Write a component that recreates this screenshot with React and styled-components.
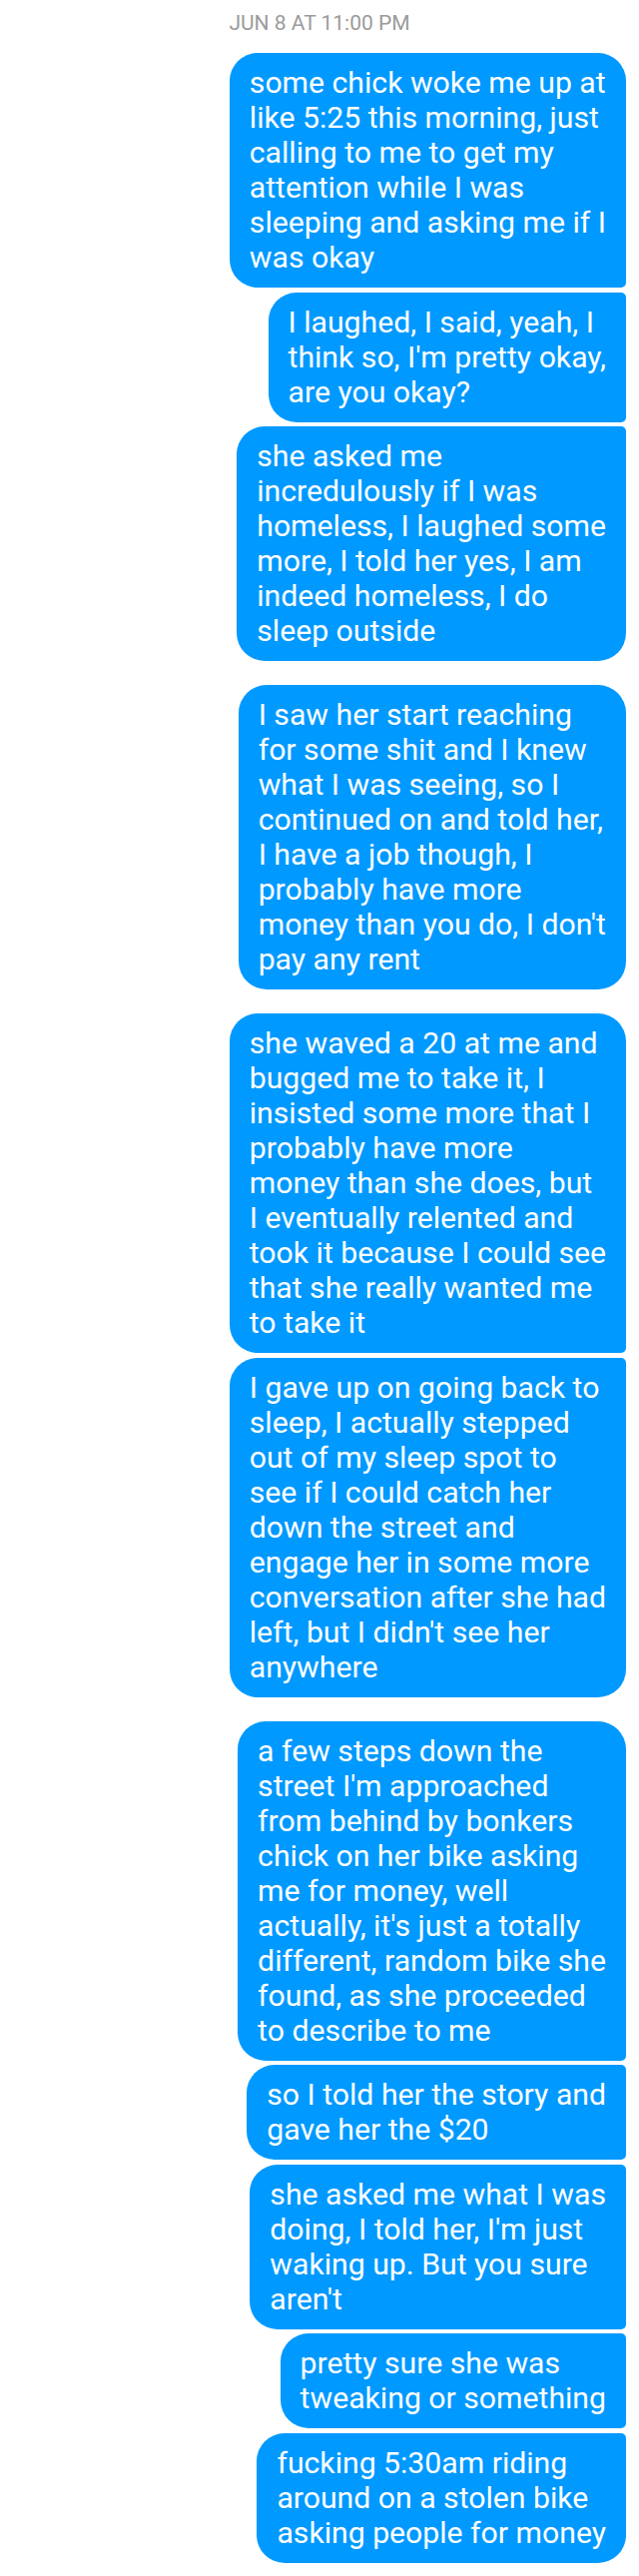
import styled, { createGlobalStyle } from 'styled-components';

const GlobalStyle = createGlobalStyle`
  html, body {
    margin: 0;
    padding: 0;
    background: #ffffff;
  }
  body {
    font-family: Roboto, "Noto Sans", "Liberation Sans", sans-serif;
    -webkit-font-smoothing: antialiased;
  }
`;

const Thread = styled.div`
  width: 640px;
  min-height: 2580px;
  box-sizing: border-box;
  padding: 11px 13px 0 0;
  display: flex;
  flex-direction: column;
  align-items: flex-end;
  gap: 24px;
`;

const Stamp = styled.div`
  align-self: stretch;
  padding-left: 13px;
  text-align: center;
  font-size: 21px;
  line-height: 24px;
  color: #9b9b9b;
  margin-bottom: -6px;
`;

const Group = styled.div`
  display: flex;
  flex-direction: column;
  align-items: flex-end;
  gap: 4.5px;
`;

const BIG = '28px';
const SMALL = '5px';

const radius = (pos) => {
  switch (pos) {
    case 'first':
      return `${BIG} ${BIG} ${SMALL} ${BIG}`;
    case 'middle':
      return `${BIG} ${SMALL} ${SMALL} ${BIG}`;
    case 'last':
      return `${BIG} ${SMALL} ${BIG} ${BIG}`;
    default:
      return BIG;
  }
};

const Bubble = styled.div`
  background: #0099ff;
  color: #ffffff;
  font-size: 30.2px;
  line-height: 35px;
  padding: 12px 20px 13px 20px;
  border-radius: ${(props) => radius(props.$pos)};
  white-space: nowrap;
`;

const groups = [
  [
    [
      'some chick woke me up at',
      'like 5:25 this morning, just',
      'calling to me to get my',
      'attention while I was',
      'sleeping and asking me if I',
      'was okay',
    ],
    ['I laughed, I said, yeah, I', "think so, I'm pretty okay,", 'are you okay?'],
    [
      'she asked me',
      'incredulously if I was',
      'homeless, I laughed some',
      'more, I told her yes, I am',
      'indeed homeless, I do',
      'sleep outside',
    ],
  ],
  [
    [
      'I saw her start reaching',
      'for some shit and I knew',
      'what I was seeing, so I',
      'continued on and told her,',
      'I have a job though, I',
      'probably have more',
      "money than you do, I don't",
      'pay any rent',
    ],
  ],
  [
    [
      'she waved a 20 at me and',
      'bugged me to take it, I',
      'insisted some more that I',
      'probably have more',
      'money than she does, but',
      'I eventually relented and',
      'took it because I could see',
      'that she really wanted me',
      'to take it',
    ],
    [
      'I gave up on going back to',
      'sleep, I actually stepped',
      'out of my sleep spot to',
      'see if I could catch her',
      'down the street and',
      'engage her in some more',
      'conversation after she had',
      "left, but I didn't see her",
      'anywhere',
    ],
  ],
  [
    [
      'a few steps down the',
      "street I'm approached",
      'from behind by bonkers',
      'chick on her bike asking',
      'me for money, well',
      "actually, it's just a totally",
      'different, random bike she',
      'found, as she proceeded',
      'to describe to me',
    ],
    ['so I told her the story and', 'gave her the $20'],
    [
      'she asked me what I was',
      "doing, I told her, I'm just",
      'waking up. But you sure',
      "aren't",
    ],
    ['pretty sure she was', 'tweaking or something'],
    ['fucking 5:30am riding', 'around on a stolen bike', 'asking people for money'],
  ],
];

const position = (i, count) => {
  if (count === 1) return 'single';
  if (i === 0) return 'first';
  if (i === count - 1) return 'last';
  return 'middle';
};

export default function App() {
  return (
    <>
      <GlobalStyle />
      <Thread>
        <Stamp>JUN 8 AT 11:00 PM</Stamp>
        {groups.map((msgs, g) => (
          <Group key={g}>
            {msgs.map((lines, i) => (
              <Bubble key={i} $pos={position(i, msgs.length)}>
                {lines.map((line, j) => (
                  <span key={j}>
                    {line}
                    {j < lines.length - 1 && <br />}
                  </span>
                ))}
              </Bubble>
            ))}
          </Group>
        ))}
      </Thread>
    </>
  );
}
